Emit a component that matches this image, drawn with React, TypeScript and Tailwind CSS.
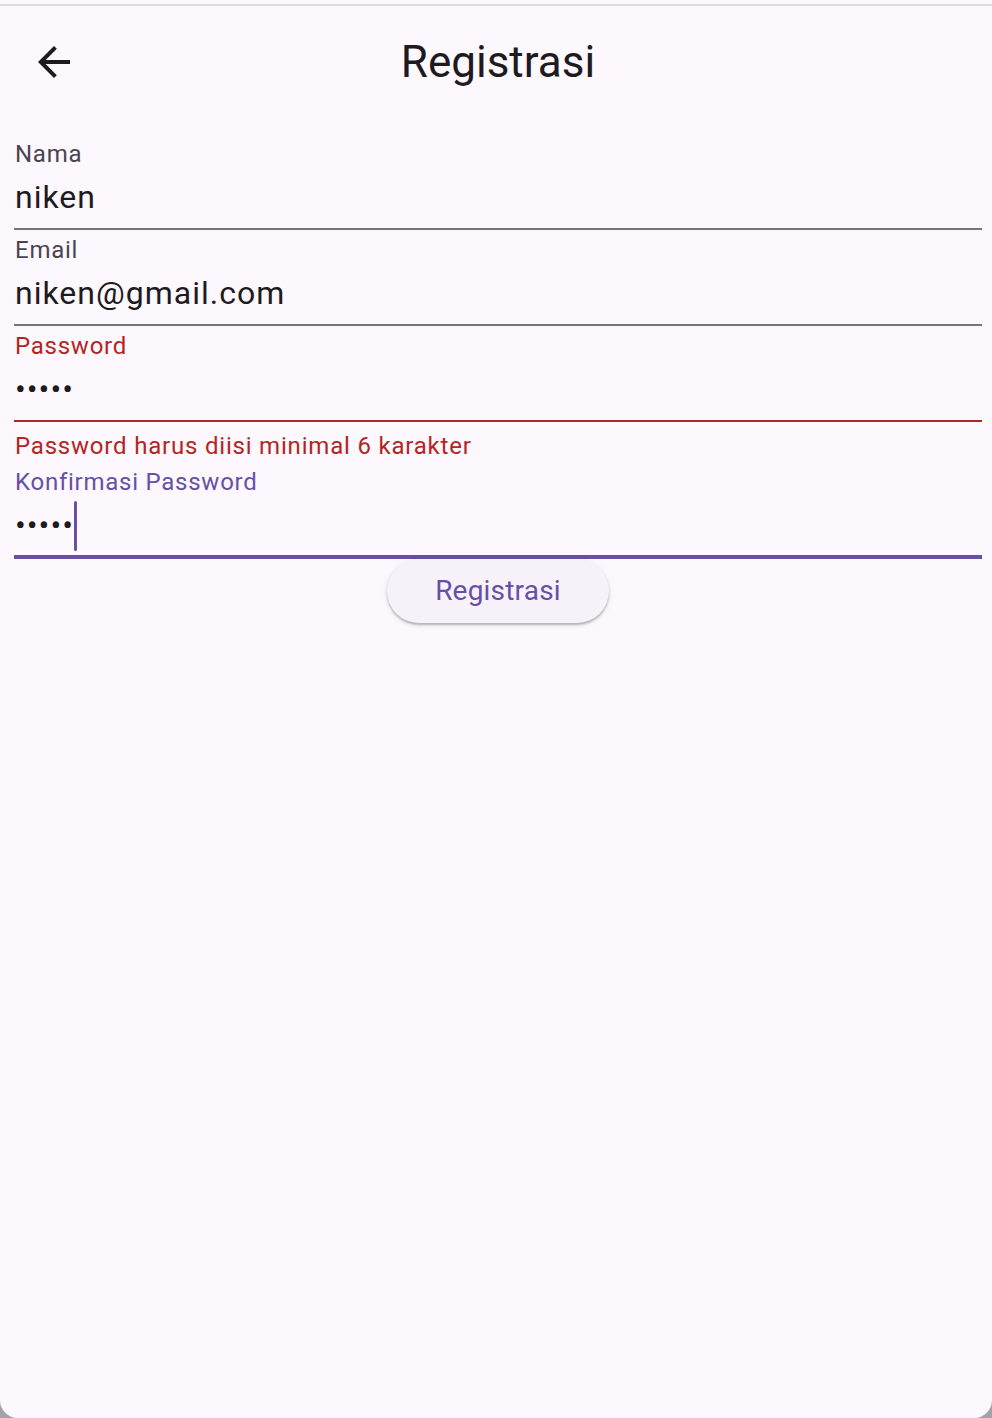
import React from "react";

const font = { fontFamily: "Roboto, 'Noto Sans', sans-serif" };

function Field({
  label,
  value,
  state,
}: {
  label: string;
  value: React.ReactNode;
  state: "normal" | "error" | "focused";
}) {
  const labelColor =
    state === "error" ? "text-[#b3261e]" : state === "focused" ? "text-[#6750a4]" : "text-[#49454f]";
  const border =
    state === "error"
      ? "h-[96px] border-b-2 border-[#b3261e]"
      : state === "focused"
      ? "h-[97px] border-b-4 border-[#6750a4]"
      : "h-[96px] border-b-2 border-[#77737c]";
  return (
    <div className={`flex flex-col ${border}`}>
      <div className={`pt-[8px] pl-[1px] h-[32px] text-[24px] leading-[24px] tracking-[0.75px] ${labelColor}`}>{label}</div>
      <div className="mt-[11px] pl-[1px] h-[40px] flex items-center text-[32px] leading-[40px] tracking-[1px] text-[#1d1b20]">
        {value}
      </div>
    </div>
  );
}

export default function App() {
  return (
    <div className="w-[992px] h-[1418px] bg-[#a3a3aa]" style={font}>
      <div className="w-full h-full bg-[#fdf7fe] rounded-b-[18px] overflow-hidden flex flex-col">
        <div className="h-[4px] bg-[#fbf9fb]" />
        <div className="h-[2px] bg-[#dedcde]" />
        <div className="pl-[14px] pr-[10px] flex flex-col">
          {/* App bar */}
          <div className="h-[112px] grid grid-cols-[1fr_auto_1fr] items-center">
            <div className="pl-[16px] flex items-center">
              <svg width="48" height="48" viewBox="0 0 24 24" fill="#1d1b20">
                <path d="M20 11H7.83l5.59-5.59L12 4l-8 8 8 8 1.41-1.41L7.83 13H20v-2z" />
              </svg>
            </div>
            <div className="text-[44px] leading-[56px] text-[#1d1b20]">Registrasi</div>
            <div />
          </div>

          <div className="h-[16px]" />

          <Field label="Nama" value="niken" state="normal" />
          <Field label="Email" value="niken@gmail.com" state="normal" />
          <Field label="Password" value="•••••" state="error" />
          <div className="h-[40px] pt-[12px] pl-[1px] text-[24px] leading-[24px] tracking-[0.8px] text-[#b3261e]">
            Password harus diisi minimal 6 karakter
          </div>
          <Field
            label="Konfirmasi Password"
            state="focused"
            value={
              <>
                <span>•••••</span>
                <span className="inline-block w-[3px] h-[50px] -my-[5px] relative top-[1px] rounded-full bg-[#6750a4]" />
              </>
            }
          />

          <div className="flex justify-center">
            <button className="w-[222px] h-[64px] rounded-full bg-[#f7f2fa] text-[#6750a4] text-[28px] tracking-[0.2px] shadow-[0_2px_2px_rgba(0,0,0,0.22),0_2px_5px_1px_rgba(0,0,0,0.08)]">
              Registrasi
            </button>
          </div>
        </div>
      </div>
    </div>
  );
}
